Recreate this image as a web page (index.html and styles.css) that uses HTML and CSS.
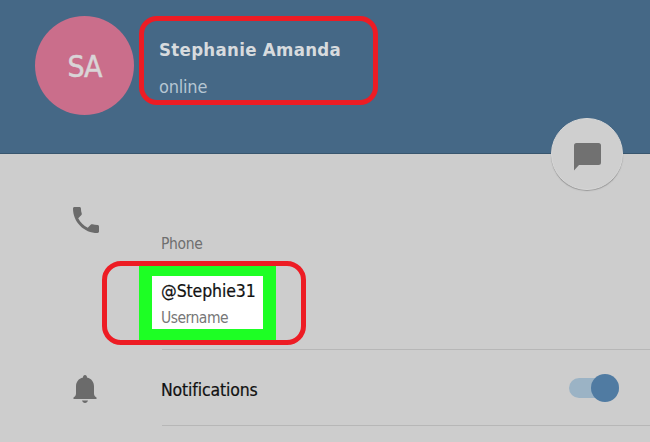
FILE: index.html
```
<!DOCTYPE html>
<html lang="en">
<head>
<meta charset="utf-8">
<title>Stephanie Amanda</title>
<link rel="stylesheet" href="styles.css">
</head>
<body>
<main class="profile">
  <header class="header">
    <div class="avatar">SA</div>
    <div class="identity">
      <h1 class="name">Stephanie Amanda</h1>
      <p class="status">online</p>
    </div>
    <button class="message" aria-label="Message">
      <svg width="27" height="28" viewBox="0 0 27 28"><path d="M2.500 0H24.500Q27 0 27 2.500V19.500Q27 22 24.500 22H5L0 27.500V2.500Q0 0 2.500 0Z"/></svg>
    </button>
  </header>
  <section class="row phone">
    <svg class="icon phone-icon" width="26" height="26" viewBox="3 3 18 18"><path d="M6.620 10.790c1.440 2.830 3.760 5.140 6.590 6.590l2.200-2.200c.27-.27.67-.36 1.020-.24 1.120.37 2.330.57 3.570.57.55 0 1 .45 1 1V20c0 .55-.45 1-1 1-9.390 0-17-7.610-17-17 0-.55.45-1 1-1h3.500c.55 0 1 .45 1 1 0 1.250.2 2.450.57 3.570.11.35.03.74-.25 1.020l-2.200 2.200z"/></svg>
    <span class="label">Phone</span>
  </section>
  <section class="username-row">
    <div class="username-outline">
      <div class="username-card">
        <p class="handle">@Stephie31</p>
        <p class="label username-label">Username</p>
      </div>
    </div>
  </section>
  <section class="row notifications">
    <svg class="icon bell-icon" width="24" height="28" viewBox="0 0 24 28"><path d="M12 0C13.300 0 14 .9 14 2.600C18.500 3.600 21 7.200 21 11.500V18.500C21 20.500 22 21.500 23.500 22.500V24H.5V22.500C2 21.500 3 20.500 3 18.500V11.500C3 7.200 5.500 3.600 10 2.600C10 .9 10.700 0 12 0ZM9 25.500H15C14.500 27 13.500 28 12 28S9.500 27 9 25.500Z"/></svg>
    <div class="setting">
      <span class="setting-name">Notifications</span>
      <span class="toggle"><span class="knob"></span></span>
    </div>
  </section>
</main>
</body>
</html>
```
FILE: styles.css
```
* { box-sizing: border-box; }
body {
  margin: 0;
  background: #cdcdcd;
  font-family: "DejaVu Sans Condensed", "DejaVu Sans", sans-serif;
  font-stretch: condensed;
}
h1, p { margin: 0; }
.profile { height: 442px; overflow: hidden; }
.header {
  position: relative;
  display: flex;
  align-items: flex-start;
  height: 154px;
  padding: 16px 0 0 35px;
  background: #456886;
  border-bottom: 1px solid #38566e;
}
.avatar {
  width: 99px;
  height: 99px;
  border-radius: 50%;
  background: #ca6e8b;
  color: #d9d5d7;
  font-size: 30px;
  line-height: 101px;
  letter-spacing: -1px;
  text-align: center;
  -webkit-text-stroke: 0.5px #d9d5d7;
}
.identity {
  width: 239px;
  height: 89px;
  margin-left: 5px;
  padding: 20px 0 0 15px;
  border: 5px solid #ed1c24;
  border-radius: 18px;
  white-space: nowrap;
}
.name {
  color: #d7dbde;
  font-size: 18.5px;
  line-height: 18px;
  letter-spacing: 0.3px;
}
.status {
  margin-top: 19px;
  color: #b5c6d3;
  font-size: 18px;
  line-height: 18px;
  letter-spacing: -0.2px;
}
.message {
  position: absolute;
  left: 551px;
  top: 118px;
  display: grid;
  place-items: center;
  width: 72px;
  height: 72px;
  padding: 5px 0 0 1px;
  border: 1px solid #d8d8d8;
  border-radius: 50%;
  background: #cfcfcf;
  box-shadow: 0 1px 1px #7779;
  fill: #717171;
}
.row { display: grid; grid-template-columns: 161px 1fr; }
.icon { fill: #6b6b6b; }
.phone { height: 107px; padding-top: 53px; }
.phone-icon { margin-left: 73px; }
.label {
  color: #6f6f6f;
  font-size: 15.5px;
  line-height: 16px;
  letter-spacing: -0.35px;
}
.phone .label { margin-top: 29px; }
.username-row { height: 88px; padding-left: 102px; }
.username-outline {
  width: 204px;
  height: 84px;
  padding: 0 25px 0 32px;
  border: 5px solid #ed1c24;
  border-radius: 19px;
}
.username-card {
  width: 137px;
  height: 74px;
  padding: 5px 0 0 9px;
  border: solid #1dff24;
  border-width: 10px 13px 11px;
  background: #fff;
  white-space: nowrap;
}
.handle {
  color: #111;
  font-size: 17.5px;
  line-height: 20px;
  letter-spacing: -0.1px;
  -webkit-text-stroke: 0.2px #111;
}
.username-label { margin-top: 9px; color: #777; letter-spacing: -0.5px; }
.notifications { height: 93px; }
.bell-icon { margin: 26px 0 0 73px; }
.setting {
  display: flex;
  align-items: center;
  justify-content: space-between;
  height: 77px;
  margin-left: 1px;
  padding: 1px 31px 0 0;
  border-top: 1px solid #b7b7b7;
  border-bottom: 1px solid #b7b7b7;
}
.setting-name {
  margin: 3px 0 0 -1px;
  color: #111;
  font-size: 17.5px;
  letter-spacing: -0.15px;
  -webkit-text-stroke: 0.2px #111;
}
.toggle {
  display: flex;
  align-items: center;
  justify-content: flex-end;
  width: 50px;
  height: 20px;
  border-radius: 10px;
  background: #9bb3c5;
}
.knob {
  width: 28px;
  height: 28px;
  border-radius: 50%;
  background: #507ba2;
  flex: none;
}
```
